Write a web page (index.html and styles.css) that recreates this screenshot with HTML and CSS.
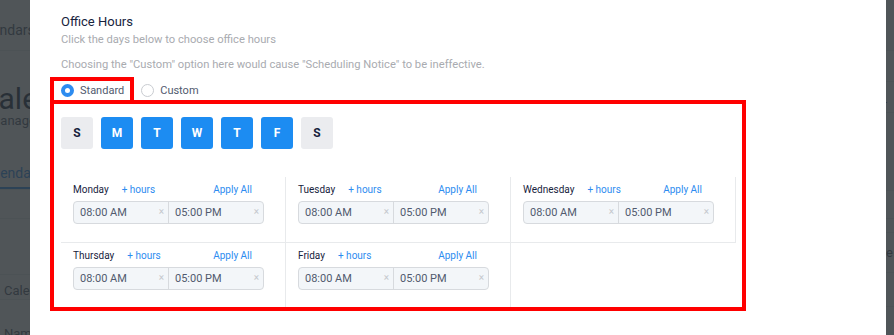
FILE: index.html
```html
<!DOCTYPE html>
<html lang="en">
<head>
  <meta charset="UTF-8" />
  <title>Office Hours</title>
  <link rel="stylesheet" href="styles.css">
</head>
<body>
  <!-- page behind the dialog -->
  <div class="page">
    <div class="page-top"><span class="crumb">Calendars</span></div>
    <div class="page-body">
      <div class="page-main">
        <h1>Calendar Settings</h1>
        <p class="lead">Manage your calendars</p>
        <div class="tabs">
          <span class="tab active">Calendars</span>
        </div>
        <div class="table-head"></div>
        <div class="table-row"></div>
        <div class="table-row text">Calendar</div>
        <div class="table-row text last">Name</div>
      </div>
      <aside class="page-side">
        <div class="side-row h31"></div>
        <div class="side-row h31 dash">-</div>
        <div class="side-row h78"></div>
        <div class="side-row h28"></div>
        <div class="side-row h14"></div>
        <div class="side-row h40">Name</div>
        <div class="side-row h34"></div>
      </aside>
    </div>
  </div>

  <div class="mask"></div>

  <div class="modal">
    <h3 class="modal-title">Office Hours</h3>
    <p class="hint">Click the days below to choose office hours</p>
    <p class="hint warn">Choosing the "Custom" option here would cause "Scheduling Notice" to be ineffective.</p>

    <div class="radio-group">
      <label class="radio checked"><span class="radio-dot"></span>Standard</label>
      <label class="radio"><span class="radio-dot"></span>Custom</label>
    </div>

    <div class="day-picker">
      <button class="day-btn">S</button>
      <button class="day-btn on">M</button>
      <button class="day-btn on">T</button>
      <button class="day-btn on">W</button>
      <button class="day-btn on">T</button>
      <button class="day-btn on">F</button>
      <button class="day-btn">S</button>
    </div>

    <div class="hours-grid">
      <div class="day-cell">
        <div class="cell-head"><span class="day-name">Monday</span><a class="add-hours">+ hours</a><a class="apply-all">Apply All</a></div>
        <div class="time-range">
          <div class="time-part">08:00 AM<span class="clear">×</span></div>
          <div class="time-part">05:00 PM<span class="clear">×</span></div>
        </div>
      </div>
      <div class="day-cell">
        <div class="cell-head"><span class="day-name">Tuesday</span><a class="add-hours">+ hours</a><a class="apply-all">Apply All</a></div>
        <div class="time-range">
          <div class="time-part">08:00 AM<span class="clear">×</span></div>
          <div class="time-part">05:00 PM<span class="clear">×</span></div>
        </div>
      </div>
      <div class="day-cell">
        <div class="cell-head"><span class="day-name">Wednesday</span><a class="add-hours">+ hours</a><a class="apply-all">Apply All</a></div>
        <div class="time-range">
          <div class="time-part">08:00 AM<span class="clear">×</span></div>
          <div class="time-part">05:00 PM<span class="clear">×</span></div>
        </div>
      </div>
      <div class="day-cell">
        <div class="cell-head"><span class="day-name">Thursday</span><a class="add-hours">+ hours</a><a class="apply-all">Apply All</a></div>
        <div class="time-range">
          <div class="time-part">08:00 AM<span class="clear">×</span></div>
          <div class="time-part">05:00 PM<span class="clear">×</span></div>
        </div>
      </div>
      <div class="day-cell">
        <div class="cell-head"><span class="day-name">Friday</span><a class="add-hours">+ hours</a><a class="apply-all">Apply All</a></div>
        <div class="time-range">
          <div class="time-part">08:00 AM<span class="clear">×</span></div>
          <div class="time-part">05:00 PM<span class="clear">×</span></div>
        </div>
      </div>
    </div>

    <!-- red review marks -->
    <div class="annot annot-radio"></div>
    <div class="annot annot-hours"></div>
  </div>
</body>
</html>
```

FILE: styles.css
```css
* {
  box-sizing: border-box;
}
body {
  margin: 0;
  font-family: Roboto, 'Liberation Sans', sans-serif;
  background: #fff;
  overflow: hidden;
}

/* page behind the dialog (only its edges show) */
.page {
  height: 100vh;
  color: #515a6e;
}
.page-top {
  height: 51px;
  padding-top: 20px;
  border-bottom: 1px solid #e8eaec;
  font-size: 14px;
  line-height: 20px;
  overflow: hidden;
  white-space: nowrap;
}
.crumb {
  display: inline-block;
  width: 58px;
  margin-left: -28px;
  overflow: hidden;
}
.page-body {
  display: flex;
}
.page-main {
  flex: 0 0 30px;
  overflow: hidden;
  white-space: nowrap;
}
.page-main h1 {
  margin: 36px 0 0 -21px;
  font-size: 30px;
  font-weight: 400;
  line-height: 24px;
  color: #17233d;
}
.lead {
  margin: 3px 0 0 -11px;
  font-size: 13px;
  line-height: 13px;
}
.tabs {
  margin-top: 33px;
  border-bottom: 1px solid #e8eaec;
  font-size: 14px;
  line-height: 20px;
}
.tab {
  display: inline-block;
  margin-left: -20px;
  padding: 3px 0 4px;
}
.tab.active {
  color: #2d8cf0;
  border-bottom: 2px solid #2d8cf0;
}
.table-head {
  height: 29px;
  border-bottom: 1px solid #e8eaec;
}
.table-row {
  height: 56px;
  border-bottom: 1px solid #e8eaec;
}
.table-row.text {
  height: 25px;
  padding: 8px 0 0 4px;
  font-size: 13px;
  line-height: 16px;
}
.table-row.text.last {
  height: 50px;
  padding-top: 26px;
}
.page-side {
  flex: 1;
  text-align: right;
  font-size: 13px;
  line-height: 16px;
}
.side-row {
  border-bottom: 1px solid #e8eaec;
  padding: 12px 1px 0 0;
}
.side-row.dash {
  padding-right: 7px;
}
.h31 { height: 31px; }
.h78 { height: 78px; }
.h28 { height: 28px; }
.h14 { height: 14px; }
.h40 { height: 40px; }
.h34 { height: 34px; }

.mask {
  position: fixed;
  inset: 0;
  background: rgba(44, 50, 54, 0.83);
}

/* dialog */
.modal {
  position: fixed;
  top: 0;
  left: 30px;
  width: 856px;
  height: 100%;
  background: #fff;
  padding: 14px 31px;
}
.modal-title {
  margin: 0;
  font-size: 13px;
  font-weight: 400;
  line-height: 16px;
  color: #17233d;
}
.hint {
  margin: 2px 0 0;
  font-size: 11.2px;
  line-height: 16px;
  color: #a9abb0;
}
.hint.warn {
  margin-top: 9px;
}
.radio-group {
  display: flex;
  align-items: center;
  gap: 17px;
  margin-top: 9px;
  height: 16px;
}
.radio {
  display: flex;
  align-items: center;
  gap: 6px;
  font-size: 11px;
  color: #515a6e;
}
.radio-dot {
  width: 13px;
  height: 13px;
  border-radius: 50%;
  border: 1px solid #c9ccd1;
  background: #fff;
}
.radio.checked .radio-dot {
  border: 4px solid #2d8cf0;
}
.day-picker {
  display: flex;
  gap: 8px;
  margin-top: 19px;
}
.day-btn {
  width: 32px;
  height: 32px;
  border: none;
  border-radius: 3px;
  background: #ebecef;
  color: #17233d;
  font-family: inherit;
  font-size: 12px;
  font-weight: 700;
  padding: 0;
}
.day-btn.on {
  background: #1c8cf2;
  color: #fff;
}

.hours-grid {
  display: grid;
  grid-template-columns: repeat(3, 225px);
  margin-top: 28px;
}
.day-cell {
  padding: 5px 21px 18px 12px;
  border-right: 1px solid #e8eaec;
}
.day-cell:nth-child(-n+3) {
  border-bottom: 1px solid #e8eaec;
}
.cell-head {
  display: flex;
  align-items: center;
  height: 14px;
  padding-right: 12px;
  margin-bottom: 5px;
  font-size: 10px;
}
.day-name {
  color: #17233d;
}
.add-hours {
  margin-left: 13px;
  color: #2d8cf0;
}
.apply-all {
  margin-left: auto;
  color: #2d8cf0;
}
.time-range {
  display: flex;
  height: 23px;
  border: 1px solid #d7dade;
  border-radius: 4px;
  background: #f3f6f9;
}
.time-part {
  flex: 1;
  display: flex;
  align-items: center;
  padding: 0 4px 0 6px;
  font-size: 11px;
  color: #515a6e;
}
.time-part + .time-part {
  border-left: 1px solid #d7dade;
}
.clear {
  margin-left: auto;
  margin-top: -3px;
  font-size: 10px;
  color: #c5c8ce;
}

/* review marks drawn over the dialog */
.annot {
  position: absolute;
  border: 4px solid #ff0000;
  pointer-events: none;
}
.annot-radio {
  left: 20px;
  top: 77px;
  width: 84px;
  height: 27px;
}
.annot-hours {
  left: 20px;
  top: 100px;
  width: 696px;
  height: 211px;
}
```
